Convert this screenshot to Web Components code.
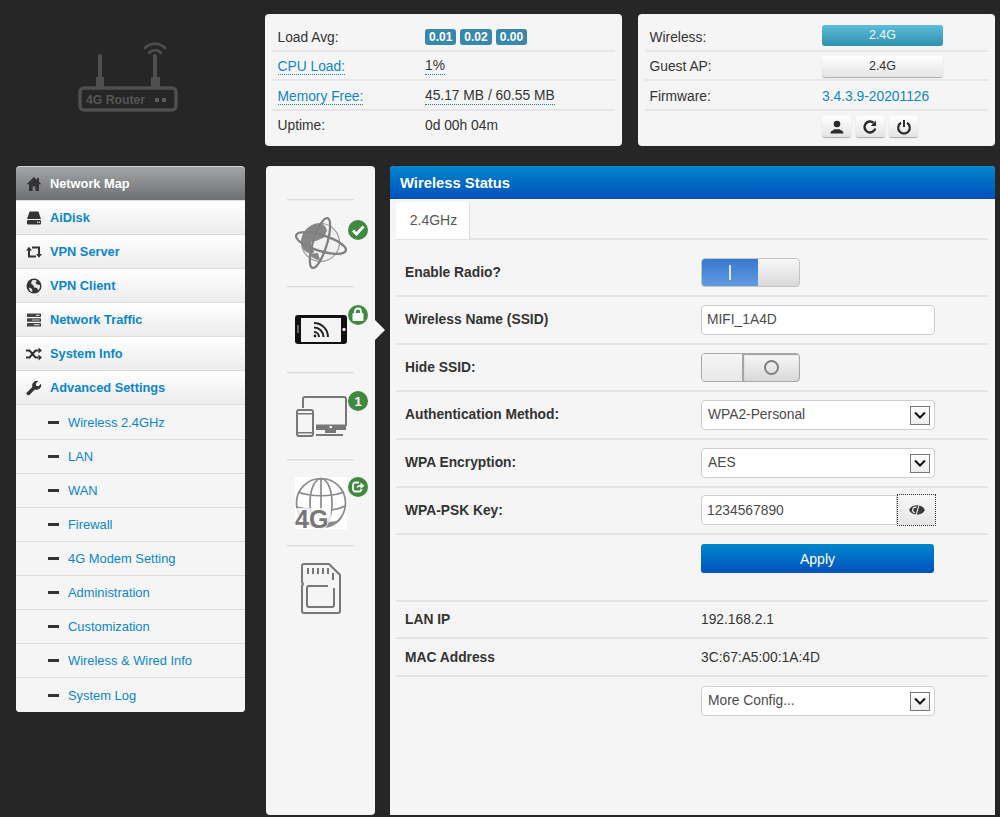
<!DOCTYPE html>
<html><head><meta charset="utf-8"><title>Wireless Status</title>
<style>
html,body{margin:0;padding:0;height:817px;overflow:hidden;background:#262626}
body{font-family:"Liberation Sans",Arial,sans-serif;color:#333}
</style></head>
<body>
<app-page>
  <router-logo slot="logo"></router-logo>
  <status-card slot="cards">
    <status-row label="Load Avg:" w="153"><load-badge>0.01</load-badge><load-badge>0.02</load-badge><load-badge>0.00</load-badge></status-row>
    <status-row label="CPU Load:" link w="153"><dot-under>1%</dot-under></status-row>
    <status-row label="Memory Free:" link w="153"><dot-under>45.17 MB / 60.55 MB</dot-under></status-row>
    <status-row label="Uptime:" w="153" last>0d 00h 04m</status-row>
  </status-card>
  <status-card slot="cards">
    <status-row label="Wireless:" w="177" second up><pill-btn kind="info">2.4G</pill-btn></status-row>
    <status-row label="Guest AP:" w="177" second><pill-btn>2.4G</pill-btn></status-row>
    <status-row label="Firmware:" w="177" second><fw-link>3.4.3.9-20201126</fw-link></status-row>
    <status-row label="" w="177" second last><icon-btn icon="user"></icon-btn><icon-btn icon="refresh"></icon-btn><icon-btn icon="power"></icon-btn></status-row>
  </status-card>
  <side-menu slot="menu">
    <menu-item icon="home" active>Network Map</menu-item>
    <menu-item icon="disk">AiDisk</menu-item>
    <menu-item icon="retweet">VPN Server</menu-item>
    <menu-item icon="globe">VPN Client</menu-item>
    <menu-item icon="server">Network Traffic</menu-item>
    <menu-item icon="random">System Info</menu-item>
    <menu-item icon="wrench">Advanced Settings</menu-item>
    <menu-item sub tall>Wireless 2.4GHz</menu-item>
    <menu-item sub>LAN</menu-item>
    <menu-item sub>WAN</menu-item>
    <menu-item sub>Firewall</menu-item>
    <menu-item sub>4G Modem Setting</menu-item>
    <menu-item sub>Administration</menu-item>
    <menu-item sub>Customization</menu-item>
    <menu-item sub>Wireless &amp; Wired Info</menu-item>
    <menu-item sub last>System Log</menu-item>
  </side-menu>
  <icon-rail slot="rail">
    <rail-item icon="internet" badge="check" btop="21"></rail-item>
    <rail-item icon="phone" badge="lock" btop="19.5"></rail-item>
    <rail-item icon="devices" badge="one" btop="19"></rail-item>
    <rail-item icon="net4g" badge="share" btop="18.5"></rail-item>
    <rail-item icon="sd"></rail-item>
  </icon-rail>
  <wifi-panel slot="main">
    <form-row label="Enable Radio?" h="57" pt="9"><toggle-switch on></toggle-switch></form-row>
    <form-row label="Wireless Name (SSID)" h="48" lift><text-field>MIFI_1A4D</text-field></form-row>
    <form-row label="Hide SSID:" h="47"><toggle-switch></toggle-switch></form-row>
    <form-row label="Authentication Method:" h="48" lift><select-field>WPA2-Personal</select-field></form-row>
    <form-row label="WPA Encryption:" h="48" lift><select-field>AES</select-field></form-row>
    <form-row label="WPA-PSK Key:" h="47"><text-field eye>1234567890</text-field></form-row>
    <form-row h="67" pt="9" pb="27"><apply-btn>Apply</apply-btn></form-row>
    <form-row label="LAN IP" h="37" plain>192.168.2.1</form-row>
    <form-row label="MAC Address" h="38" plain>3C:67:A5:00:1A:4D</form-row>
    <form-row h="48" last><select-field>More Config...</select-field></form-row>
  </wifi-panel>
</app-page>
<script>
const FONT="'Liberation Sans',Arial,sans-serif";
function def(name,render){
  customElements.define(name,class extends HTMLElement{
    constructor(){super();this.attachShadow({mode:'open'});}
    connectedCallback(){this.shadowRoot.innerHTML=render(this);}
  });
}
const ICONS={
 home:'<path d="M8 1 .5 8.2H3V15h3.6v-4.6h2.8V15H13V8.2h2.5L13 5.8V2h-2v1.9z"/>',
 disk:'<path d="M3.6 1.5h8.8L15 9H1z"/><rect x="1" y="10" width="14" height="4.5" rx="1"/><rect x="11" y="11.6" width="1.4" height="1.4" fill="#ddd"/><rect x="13" y="11.6" width="1.2" height="1.4" fill="#ddd"/>',
 retweet:'<path d="M3 6v6.5h7M6 3.5h7V10" fill="none" stroke="#333" stroke-width="2"/><path d="M0 6.5 3 2.8 6 6.5zM10 10l3 3.7 3-3.7z"/>',
 globe:'<circle cx="8" cy="8" r="7.5"/><path d="M6 2.5c2-.7 4-.4 5 .6l-1.5 2 1.5 1.5 3 .4c.3 2-.3 4-1.8 5.3l-1.2-2.3-2.8-.6-1-2.2L5 5.6zM3 9.5l2.5 1L6.6 13l-1 1C3.8 13 2.8 11.3 3 9.5z" fill="#e6e6e6"/>',
 server:'<rect x="1" y="1.5" width="14" height="3.6" rx=".6" fill="#444"/><rect x="1" y="6.2" width="14" height="3.6" rx=".6" fill="#444"/><rect x="1" y="10.9" width="14" height="3.6" rx=".6" fill="#444"/><path d="M10 2.7h3.5v1.2H10zM6 7.4h7.5v1.2H6zM8 12.1h5.5v1.2H8z" fill="#ccc"/>',
 random:'<path d="M0 4.5h3.5L9.5 11.5H12.5M0 11.5h3.5L9.5 4.5H12.5" fill="none" stroke="#333" stroke-width="2"/><path d="M12.5 1.5v6l3.5-3zM12.5 8.5v6l3.5-3z"/>',
 wrench:'<path d="M15 3.8 12.4 6.3 10.2 5.8 9.7 3.7 12.3 1.1A4.6 4.6 0 0 0 6.4 6.9L1.1 12.2a1.7 1.7 0 0 0 2.5 2.5L8.9 9.4A4.6 4.6 0 0 0 15 3.8Z"/>'
};
def('app-page',()=>`<style>
:host{display:block;box-sizing:border-box;width:1000px;height:817px;padding:14px 5px 2px 16px}
.top{display:flex;height:132px}
.logo{width:229px;margin-right:20px}
.cards{display:flex;gap:16px}
.bottom{display:flex;align-items:stretch;height:649px;margin-top:20px}
.menu{width:229px;margin-right:21px}
.rail{width:109px;margin-right:15px}
.main{width:605px}
</style>
<div class="top"><div class="logo"><slot name="logo"></slot></div><div class="cards"><slot name="cards"></slot></div></div>
<div class="bottom"><div class="menu"><slot name="menu"></slot></div><div class="rail"><slot name="rail"></slot></div><div class="main"><slot name="main"></slot></div></div>`);
def('router-logo',()=>`<style>:host{display:block;height:132px}svg{display:block}text{font:bold 12px ${FONT};fill:#565656}</style>
<svg width="229" height="132" viewBox="0 0 229 132" fill="none">
<g stroke="#4f4f4f" stroke-linecap="round">
<path d="M84 42V64M139 42V64" stroke-width="4"/>
<path d="M129 34a14 14 0 0 1 20 0M133 39a8 8 0 0 1 12 0" stroke-width="2.6"/>
<rect x="64" y="74" width="96" height="22" rx="4" stroke-width="3.5"/>
</g>
<path d="M80 63h8v10h-8zM135 63h9v10h-9z" fill="#4f4f4f"/>
<text x="70" y="90" textLength="59" lengthAdjust="spacingAndGlyphs">4G Router</text>
<rect x="139" y="84" width="4" height="4" fill="#5a5a5a"/><rect x="146" y="84" width="4" height="4" fill="#5a5a5a"/>
</svg>`);
def('status-card',()=>`<style>:host{display:block;box-sizing:border-box;width:357px;height:132px;padding:8px 7px 0 7px;background:#f5f5f5;border-radius:4px;font:13.8px ${FONT};color:#333}</style><slot></slot>`);
def('status-row',e=>{const lk=e.hasAttribute('link'),last=e.hasAttribute('last'),sec=e.hasAttribute('second');return `<style>
:host{display:flex;align-items:center;box-sizing:border-box;height:29.6px;${last?'':'border-bottom:2px solid #e6e6e6;padding-top:3px;'}}
.l{box-sizing:border-box;width:${e.getAttribute('w')}px;padding-left:${sec?4.5:5.5}px;flex:none;${lk?'color:#0f86c6;':''}}
.l span{${lk?'border-bottom:1px dotted #1b7fb5;':''}}
.v{display:flex;align-items:center;gap:${sec?4.5:4}px;${e.hasAttribute('up')?'margin-bottom:3.6px;':''}${last&&sec?'margin-top:2px;':''}}
</style><div class="l"><span>${e.getAttribute('label')}</span></div><div class="v"><slot></slot></div>`});
def('load-badge',()=>`<style>:host{display:block;background:#3a87ad;color:#fff;font:bold 12px ${FONT};padding:1.5px 4px;border-radius:3px;line-height:13px}</style><slot></slot>`);
def('dot-under',()=>`<style>:host{display:inline-block;border-bottom:1px dotted #1b7fb5;line-height:16px}</style><slot></slot>`);
def('fw-link',()=>`<style>:host{color:#0f86c6;font-size:13.8px;display:block}</style><slot></slot>`);
def('pill-btn',e=>{const i=e.getAttribute('kind')=='info';return `<style>:host{display:block;box-sizing:border-box;width:121px;height:21px;text-align:center;font:12.5px/21px ${FONT};border-radius:3px;${i?'background:linear-gradient(#5bbcdb,#2f90ae);color:#f2f8fb;':'color:#333;background:linear-gradient(#fff,#e4e4e4);box-shadow:0 1px 1px #aaa;'}}</style><slot></slot>`});
def('icon-btn',e=>{const g={user:'<circle cx="8" cy="5" r="3.3"/><path d="M1.5 14.5c0-3 2.5-3 4-4.3h5c1.5 1.3 4 1.3 4 4.3z"/>',
 refresh:'<path d="M13.3 9.5A5.5 5.5 0 1 1 11.5 3.7" fill="none" stroke="#2a2a2a" stroke-width="2.4"/><path d="M14 1.5v5.5H8.8z"/>',
 power:'<path d="M5 3.8a5.8 5.8 0 1 0 6 0" fill="none" stroke="#2a2a2a" stroke-width="2.2"/><rect x="7" y="1" width="2" height="7"/>'}[e.getAttribute('icon')];
 return `<style>:host{display:flex;align-items:center;justify-content:center;box-sizing:border-box;width:29px;height:21px;border-radius:3px;background:linear-gradient(#fff,#e4e4e4);box-shadow:0 1px 1px #aaa}</style><svg width="16" height="16" viewBox="0 0 16 16" fill="#2a2a2a">${g}</svg>`});
def('side-menu',()=>`<style>:host{display:flex;flex-direction:column;box-sizing:border-box;width:229px;height:546px;background:#f5f5f5;border-radius:4px;overflow:hidden;border-top:1px solid #d0d0d0}</style><slot></slot>`);
def('menu-item',e=>{const a=e.hasAttribute('active'),s=e.hasAttribute('sub'),ic=e.getAttribute('icon');
 const bg=a?'linear-gradient(#a2a4a6,#6d6f72)':s?'#f5f5f5':'linear-gradient(#fff,#ececec)';
 return `<style>
:host{flex:none;height:${e.hasAttribute('tall')?35:34}px;display:flex;align-items:center;box-sizing:border-box;background:${bg};padding-left:${s?32:10}px;
 font:${s?'12.9px':'bold 12.8px'} ${FONT};color:${a?'#fff':'#0b86c8'};${e.hasAttribute('last')?'':'border-bottom:1px solid #dedede;'}}
svg{flex:none;margin-right:8px}
.dash{width:11px;height:3px;background:#333;margin-right:9px;flex:none}
</style>${s?'<span class="dash"></span>':`<svg width="16" height="16" viewBox="0 0 16 16" fill="#333">${ICONS[ic]}</svg>`}<slot></slot>`});
def('icon-rail',()=>`<style>:host{display:block;box-sizing:border-box;height:649px;padding-top:33px;background:#f5f5f5;border-radius:4px;position:relative}
.arrow{position:absolute;left:109px;top:154px;width:0;height:0;border-style:solid;border-width:10.5px 0 10.5px 10px;border-color:transparent transparent transparent #f5f5f5}</style><slot></slot><div class="arrow"></div>`);
const RAIL={
 internet:`<circle cx="25.5" cy="25.5" r="19" fill="#f0f0f0" stroke="#999" stroke-width="1.2"/><path d="M25 6.5a19 19 0 0 0-18 24c4 6 9 7 12 5 0-5-3-7-3-10l6-2 7-3 3-7c-1-4-4-7-7-7z" fill="#868686"/><path d="M14 37c3 4 7 6 11 6l-2-7z" fill="#868686"/>
 <g fill="none" stroke="#808080" stroke-width="2.3"><ellipse cx="26" cy="26" rx="26" ry="8" transform="rotate(17 26 26)"/><ellipse cx="25" cy="26" rx="7" ry="26" transform="rotate(17 25 26)"/></g>`,
 phone:`<rect x="0" y="11" width="52" height="29" rx="3" fill="#111"/><rect x="6" y="14" width="40" height="24" fill="#f3f3f3"/><rect x="2.2" y="21" width="1.6" height="8" fill="#777"/><circle cx="49" cy="25.5" r="1.7" fill="#f3f3f3"/>
 <g fill="none" stroke="#222" stroke-width="2"><path d="M19 19a14 14 0 0 1 14 14M19 23.5a9.5 9.5 0 0 1 9.5 9.5M19 28a5 5 0 0 1 5 5"/></g><circle cx="20" cy="32" r="1.4" fill="#222"/>`,
 devices:`<g fill="none" stroke="#777" stroke-width="2"><path d="M8 18V9a2 2 0 0 1 2-2h39a2 2 0 0 1 2 2v27"/><rect x="2" y="20" width="16" height="26" rx="2"/></g>
 <rect x="21" y="34.5" width="30" height="5.5" fill="#777"/><path d="M30 40h11v3H30zM21 44h27v2H21z" fill="#777"/><rect x="3" y="23" width="14" height="1.5" fill="#777"/><rect x="3" y="42" width="14" height="1.5" fill="#777"/><rect x="34.5" y="36" width="2.5" height="2" fill="#f5f5f5"/>`,
 net4g:`<rect width="52" height="52" fill="#fff"/><g fill="none" stroke="#8a8a8a" stroke-width="1.7"><circle cx="26" cy="26" r="24.5"/><ellipse cx="26" cy="26" rx="11" ry="24.5"/><path d="M26 1.5V34M3 15c12 5 34 5 46 0M1.5 30c8 2 12 2 14 2M36 33c5-.5 9-1.5 14-4"/></g>
 <path d="M0 31h36v21H0z" fill="#fff" opacity=".75"/><text x="0" y="51" style="font:bold 25px ${FONT};fill:#777">4G</text><path d="M31 51c8-2 14-6 17-12l-6 5-8 1" fill="#8a8a8a"/>`,
 sd:`<g fill="none" stroke="#777" stroke-width="2"><path d="M9 1h25l11 11v36a2 2 0 0 1-2 2H9a2 2 0 0 1-2-2V23l1-2-1-2V3a2 2 0 0 1 2-2z"/><path d="M33 23H14a2 2 0 0 0-2 2v17a2 2 0 0 0 2 2h23a2 2 0 0 0 2-2V25"/></g><path d="M12 5h2v6h-2zM17 5h2v6h-2zM22 5h2v6h-2zM27 5h2v6h-2zM32 5h2v6h-2zM37 10h2v7h-2z" fill="#777"/>`
};
const BADGE={
 check:'<path d="M5 10.5l3.5 3.5 7-7.5" fill="none" stroke="#fff" stroke-width="2.8"/>',
 lock:'<path d="M7 8V6.5a3 3 0 0 1 6 0V8" fill="none" stroke="#fff" stroke-width="1.8"/><rect x="4.5" y="8" width="11" height="8" rx="1" fill="#fff"/>',
 one:`<text x="10" y="14.5" text-anchor="middle" style="font:bold 13px ${FONT};fill:#fff">1</text>`,
 share:'<path d="M11 5.5H7.5A2.5 2.5 0 0 0 5 8v4a2.5 2.5 0 0 0 2.5 2.5H11a2.5 2.5 0 0 0 2.5-2.5" fill="none" stroke="#fff" stroke-width="1.8"/><path d="M8.5 11.5c0-2.500 1.800-3.600 4-3.600V5.500L16.500 8.700 12.500 12V9.700c-1.800 0-3 .5-4 1.800z" fill="#fff"/>'
};
def('rail-item',e=>{const ic=e.getAttribute('icon'),b=e.getAttribute('badge');return `<style>
:host{display:block;box-sizing:border-box;height:86.5px;position:relative}
.line{height:1px;margin:0 21px;background:#dcdcdc;box-shadow:0 1px 0 #ececec}
.ic{display:flex;justify-content:center;margin-top:17px}
.b{position:absolute;left:82px;top:${e.getAttribute('btop')||20}px;width:20px;height:20px;border-radius:50%;background:#3f8a3f}
svg{display:block;overflow:visible}
</style><div class="line"></div><div class="ic"><svg width="52" height="52" viewBox="0 0 52 52">${RAIL[ic]}</svg></div>${b?`<svg class="b" viewBox="0 0 20 20">${BADGE[b]}</svg>`:''}`});
def('wifi-panel',()=>`<style>
:host{display:block;height:649px;background:#f5f5f5;border-radius:4px 4px 0 0;overflow:hidden}
.h{height:33px;box-sizing:border-box;padding-left:10px;background:linear-gradient(#0086cb,#0051bd);color:#fff;font:bold 14.8px/34px ${FONT}}
.body{padding:3px 7px 0 6px}
.tabs{height:36px;border-bottom:2px solid #e4e4e4}
.tab{display:inline-block;box-sizing:border-box;width:74px;height:37px;padding-left:2px;background:#fff;border-right:1px solid #ddd;border-radius:3px 3px 0 0;text-align:center;font:14px/36px ${FONT};color:#555}
</style><div class="h">Wireless Status</div><div class="body"><div class="tabs"><div class="tab">2.4GHz</div></div><slot></slot></div>`);
def('form-row',e=>{const pt=+e.getAttribute('pt')||0,pb=+e.getAttribute('pb')||0,last=e.hasAttribute('last');return `<style>
:host{display:flex;align-items:center;box-sizing:border-box;height:${e.getAttribute('h')}px;padding:${pt}px 0 ${pb}px 9px;${last?'':'border-bottom:2px solid #e4e4e4;'}}
.l{width:296px;flex:none;font:bold 13.8px ${FONT};color:#333;${e.hasAttribute('lift')?'margin-bottom:2px;':''}}
.v{font:13.8px ${FONT};color:#333}
</style><div class="l">${e.getAttribute('label')||''}</div><div class="v"><slot></slot></div>`});
def('toggle-switch',e=>{const on=e.hasAttribute('on');return `<style>
:host{display:flex;box-sizing:border-box;width:99px;height:29px;border:1px solid ${on?'#c4c4c4':'#a8a8a8'};border-radius:4px;overflow:hidden;background:linear-gradient(#f8f8f8,#d8d8d8)}
.a{width:${on?56:42}px;display:flex;align-items:center;justify-content:center;${on?'background:linear-gradient(#3a78cf,#5f9ae0);':'background:linear-gradient(#f6f6f6,#e8e8e8);border-right:2px solid #a4a4a4;box-sizing:border-box;'}}
.b{flex:1;display:flex;align-items:center;justify-content:center;${on?'':'box-shadow:inset 0 1px 1px #999;'}}
.bar{width:2px;height:15px;background:#dce9f7}
.o{width:11px;height:11px;border:2px solid #808080;border-radius:50%}
</style><div class="a">${on?'<div class="bar"></div>':''}</div><div class="b">${on?'':'<div class="o"></div>'}</div>`});
const boxCss=`box-sizing:border-box;height:30px;background:#fff;border:1px solid #cfcfcf;border-radius:4px;font:13.8px/27px ${FONT};color:#4a4a4a;`;
def('text-field',e=>{const eye=e.hasAttribute('eye');return `<style>
:host{display:flex;width:${eye?235:234}px}
.i{flex:1;${boxCss}padding-left:5px;${eye?'border-radius:4px 0 0 4px;line-height:29px;':''}}
.e{display:flex;align-items:center;justify-content:center;box-sizing:border-box;width:39px;height:32px;margin-top:-1px;border:1px dotted #333;background:linear-gradient(#f8f8f8,#e6e6e6)}
</style><div class="i"><slot></slot></div>${eye?`<div class="e"><svg width="18" height="16" viewBox="0 0 16 14"><path d="M1 7C3 1.5 13 1.5 15 7 13 12.5 3 12.5 1 7z" fill="#3a3a3a"/><path d="M7.5 4.5A2.5 2.5 0 0 0 6 9.5" fill="none" stroke="#eee" stroke-width="1.1"/><path d="M10.5 0 6.5 14" stroke="#eee" stroke-width="1"/></svg></div>`:''}`});
def('select-field',()=>`<style>
:host{display:flex;align-items:center;justify-content:space-between;width:234px;padding:0 4px 0 6px;${boxCss}}
span{position:relative;top:-.5px}
.a{display:flex;align-items:center;justify-content:center;box-sizing:border-box;width:20px;height:19px;border:1px solid #767676;background:linear-gradient(#fff,#ececec)}
</style><span><slot></slot></span><div class="a"><svg width="12" height="8" viewBox="0 0 12 8"><path d="M1 1.5 6 6.5 11 1.5" fill="none" stroke="#111" stroke-width="2"/></svg></div>`);
def('apply-btn',()=>`<style>:host{display:block;width:233px;height:29px;border-radius:3px;background:linear-gradient(#0086cb,#0052bf);color:#fff;text-align:center;font:14px/30px ${FONT}}</style><slot></slot>`);
</script>
</body></html>
